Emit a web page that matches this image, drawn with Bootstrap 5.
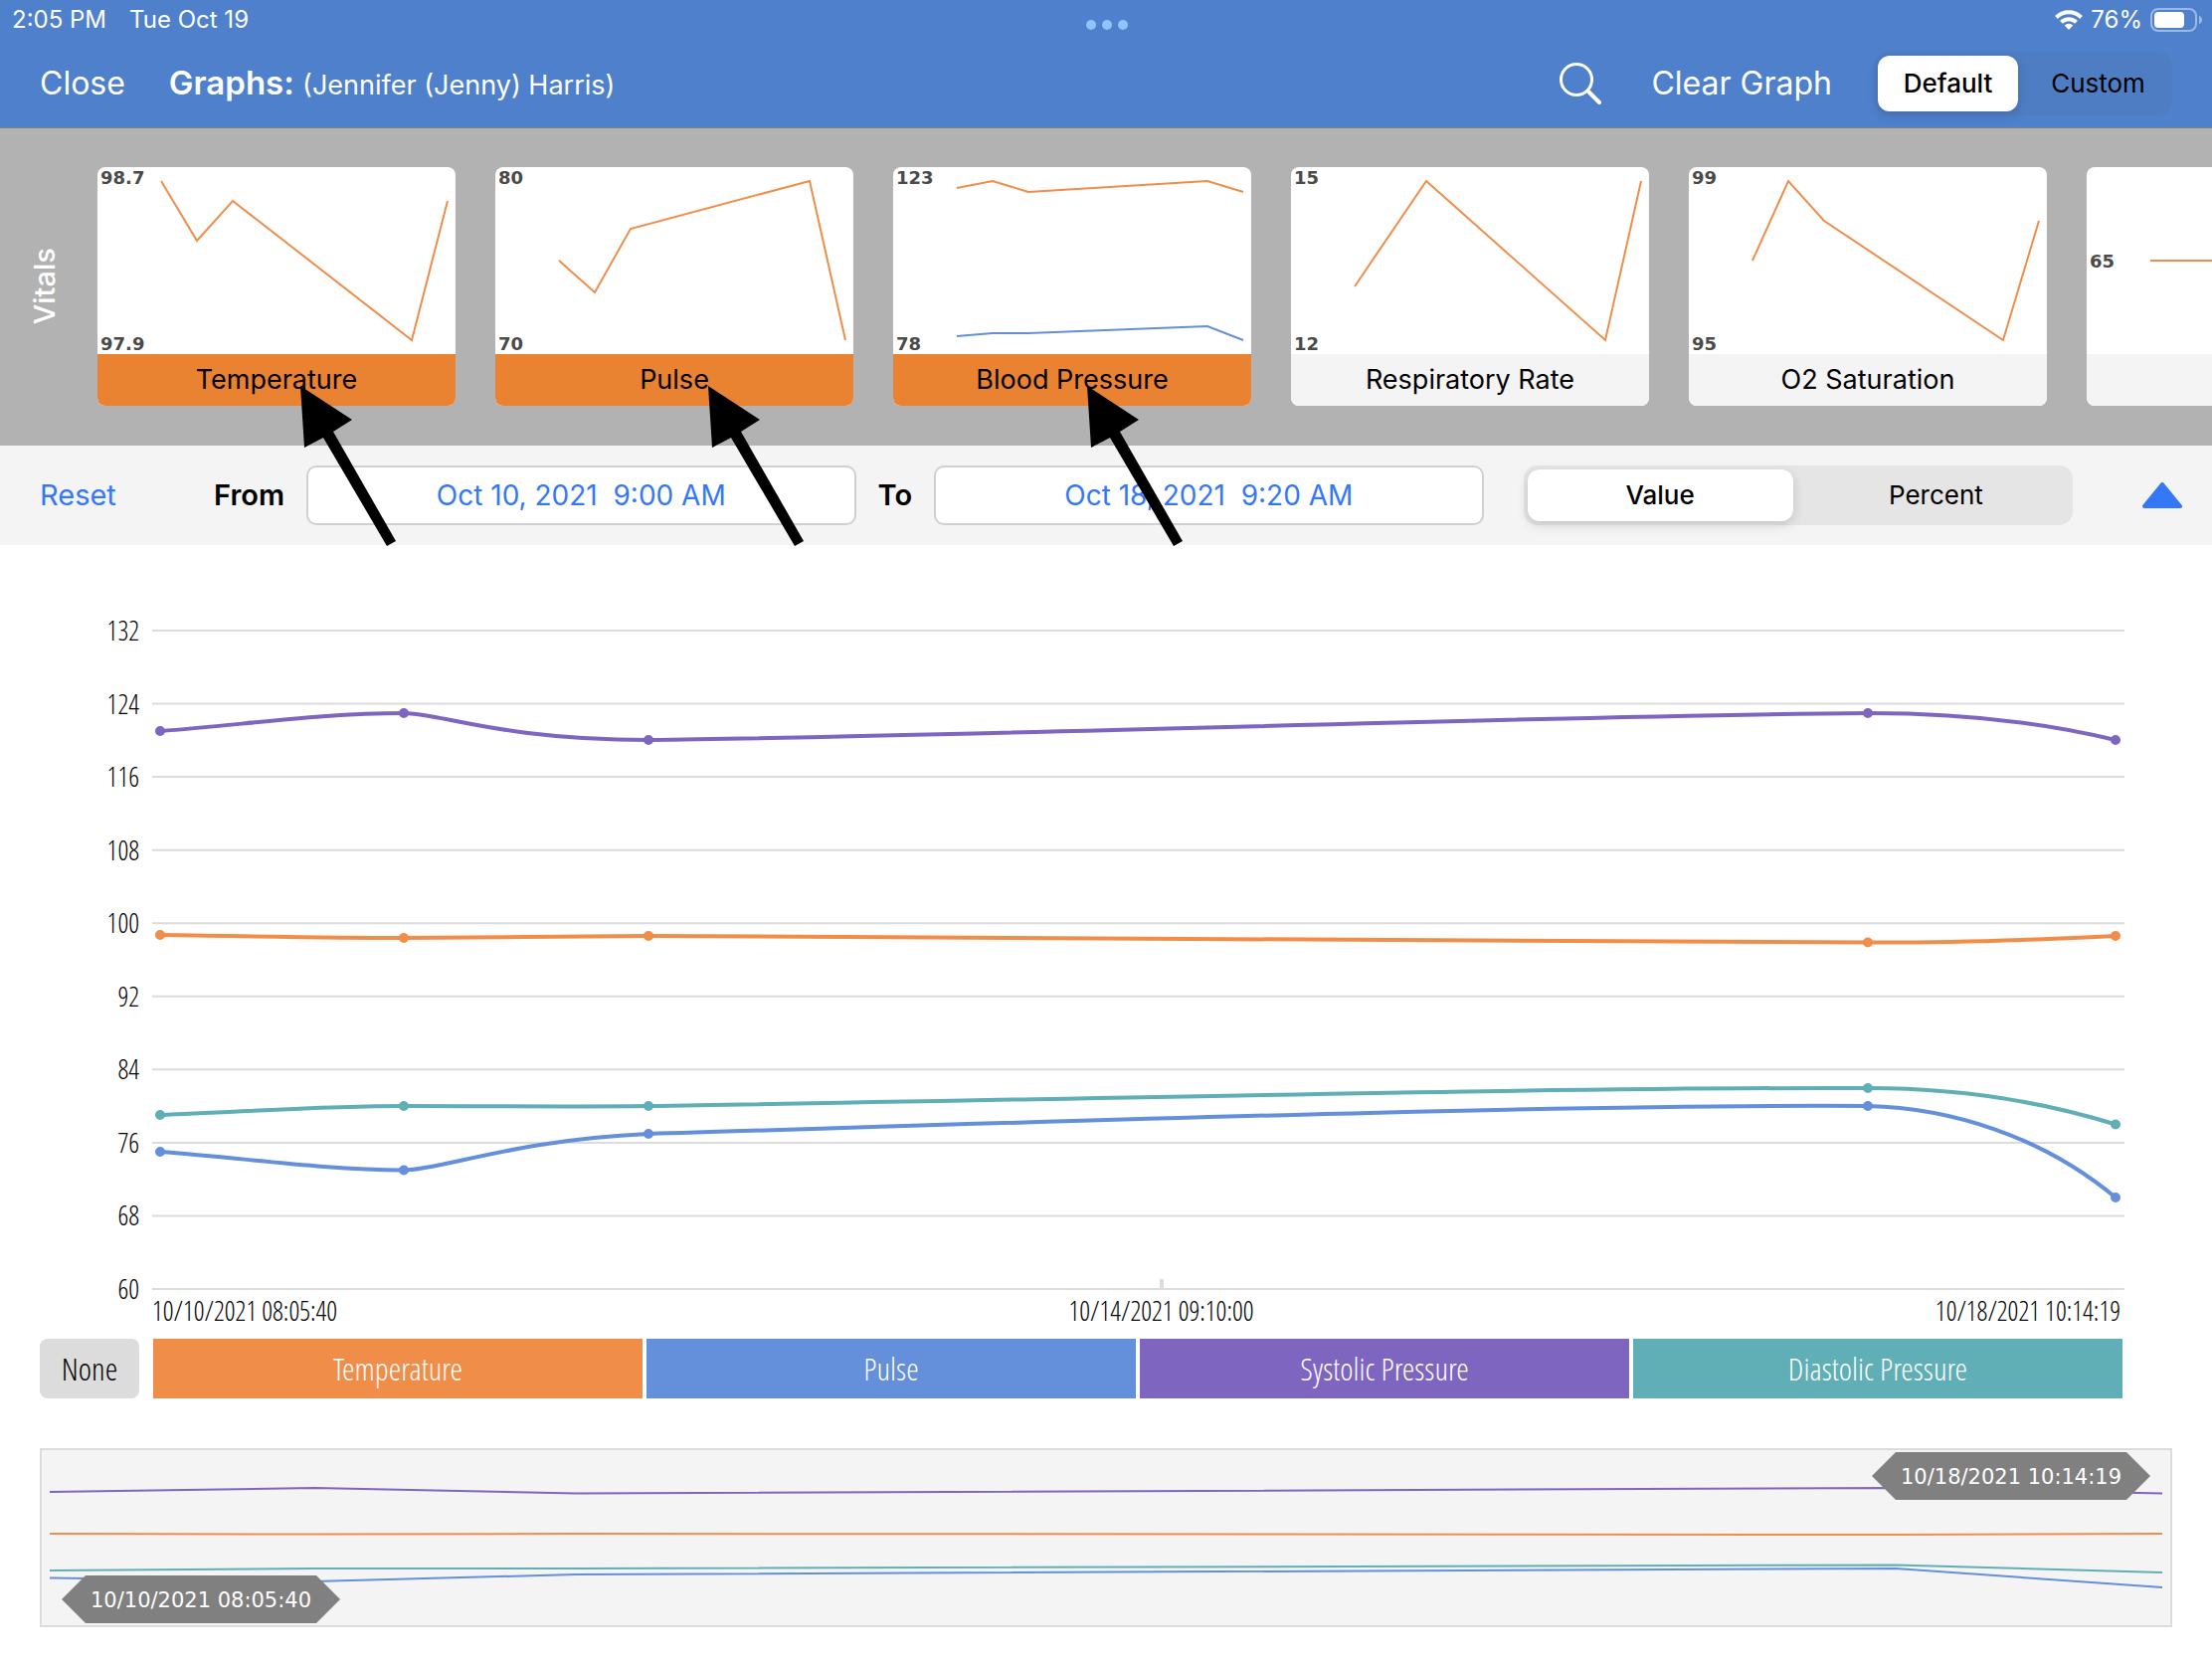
<!DOCTYPE html>
<html lang="en">
<head>
<meta charset="utf-8">
<meta name="viewport" content="width=device-width, initial-scale=1">
<title>Graphs</title>
<link href="https://cdn.jsdelivr.net/npm/bootstrap@5.3.0/dist/css/bootstrap.min.css" rel="stylesheet">
<style>
  :root { --temp: #f08d49; --pulse: #648fda; --sys: #7e65c0; --dia: #60afb7; --rule: #dcdcdc; --ios: #3478f6; }
  body { font-family: Inter, "Liberation Sans", sans-serif; color: #000; background: #fff; overflow-x: hidden; }
  svg { display: block; }
  .topbar { background: #4e80cc; color: #fff; border-bottom: 1px solid #808080; }
  .status { height: 40px; padding: 0 10px 0 12px; font-size: 24px; line-height: 40px; }
  .status-side { flex: 1 1 0; }
  .status-time { margin-right: 23px; }
  .multitask { gap: 6px; margin-top: 20px; }
  .multitask i { width: 10px; height: 10px; border-radius: 50%; background: #90c4ff; }
  .navrow { height: 88px; padding: 0 40px; }
  .nav-action { color: #fff; font-size: 32px; line-height: 40px; padding: 0; border: 0; background: none; }
  .clear-btn { margin: 0 42px 0 50px; }
  .graph-title { font-size: 33px; line-height: 40px; font-weight: 600; margin: 0 0 0 44px; }
  .graph-title span { font-size: 27px; font-weight: 400; }
  .segment { border-radius: 14px; padding: 4px; gap: 10px; background: #e5e5e5; }
  .segment label { flex: 1 1 0; text-align: center; border-radius: 12px; font-size: 26px; cursor: pointer; }
  .segment input:checked + label { background: #fff; font-weight: 500; box-shadow: 0 4px 12px rgba(0,0,0,.14); }
  .segment-nav { width: 300px; background: #4f7dc3; }
  .segment-nav label { line-height: 56px; }
  .segment-range { flex: 1 1 0; margin-left: 18px; }
  .segment-range label { line-height: 52px; }
  .strip { background: #b2b2b2; padding: 39px 0 40px; overflow-x: clip; }
  .strip-name { width: 98px; flex: none; color: #fff; font-size: 29px; font-weight: 500; }
  .strip-name span { writing-mode: vertical-rl; transform: rotate(180deg); line-height: 34px; margin-right: 8px; }
  .tiles { gap: 40px; }
  .tile { width: 360px; }
  .tile button { display: block; width: 100%; padding: 0; border: 0; border-radius: 8px; overflow: hidden; background: #fff; color: #000; }
  .tile-plot { height: 188px; padding: 1px 3px 0; }
  .tile-plot > span { font: 700 18px/20px "DejaVu Sans", sans-serif; color: #4a4a4a; }
  .tile-plot svg { position: absolute; inset: 0; fill: none; stroke-width: 2; }
  .tile-name { display: block; background: #f4f4f4; font-size: 27px; line-height: 52px; }
  .tile .active .tile-name { background: #ea8331; }
  .pointer-arrow { position: absolute; top: 220px; z-index: 3; pointer-events: none; }
  .at-temp { left: 204px; } .at-pulse { left: 214px; } .at-bp { left: 195px; }
  .rangebar { background: #f4f4f4; height: 100px; padding: 0 30px 0 40px; font-size: 29px; }
  .reset-btn { width: 175px; flex: none; padding: 0; border: 0; background: none; color: var(--ios); text-align: left; }
  .rangebar .range-label { font-weight: 600; }
  .date-box { flex: 1 1 0; min-width: 0; height: 60px; border: 2px solid #d0d0d0; border-radius: 10px; background: #fff; color: var(--ios); font-size: 28px; text-align: center; margin: 0 22px; }
  .collapse-btn { border: 0; background: none; padding: 0; margin-left: 70px; }
  .cond { font-family: "Open Sans Condensed Light", "Open Sans Condensed", "Liberation Sans Narrow", sans-serif; font-weight: 300; }
  .chart { padding: 74px 88px 0 40px; }
  .y-axis { width: 100px; height: 686px; font-size: 27px; line-height: 24px; text-align: right; }
  .plot { flex: 1 1 0; height: 662px; margin: 12px 0 0 13px; overflow: visible; fill: none; }
  .plot path, .overview path { vector-effect: non-scaling-stroke; }
  .grid-lines { stroke: var(--rule); stroke-width: 2; }
  .curve { stroke-width: 4; }
  .dots { stroke-width: 10; stroke-linecap: round; }
  .c-temp { stroke: var(--temp); } .c-pulse { stroke: var(--pulse); } .c-sys { stroke: var(--sys); } .c-dia { stroke: var(--dia); }
  .x-axis { display: grid; grid-template-columns: auto 1fr auto; padding: 0 4px 0 113px; font-size: 27px; line-height: 20px; }
  .x-axis .x-mid { padding-left: 50px; text-align: center; }
  .legend-row { padding: 18px 90px 0 40px; font-size: 32px; }
  .legend-row button { border: 0; padding: 0; height: 60px; line-height: 58px; color: #fff; flex: 1 1 0; font-weight: inherit; }
  .legend-row .none-btn { flex: none; width: 100px; margin-right: 14px; border-radius: 8px; background: var(--rule); color: #000; }
  .legend-bars { gap: 4px; }
  .legend-row .b-temp { background: var(--temp); } .legend-row .b-pulse { background: var(--pulse); } .legend-row .b-sys { background: var(--sys); } .legend-row .b-dia { background: var(--dia); }
  .overview { height: 180px; margin: 50px 40px 32px; border: 2px solid var(--rule); background: #f4f4f4; }
  .overview svg { width: 100%; height: 176px; padding: 0 8px; fill: none; stroke-width: 2; overflow: visible; }
  .handle { position: absolute; width: 280px; height: 48px; background: #808080; color: #fff; text-align: center; font: 21px/50px "DejaVu Sans", sans-serif;
    clip-path: polygon(24px 0, calc(100% - 24px) 0, 100% 50%, calc(100% - 24px) 100%, 24px 100%, 0 50%); }
  .handle-from { left: 20px; bottom: 2px; } .handle-to { right: 20px; top: 2px; }
</style>
</head>
<body>
<svg width="0" height="0" class="position-absolute" aria-hidden="true">
  <symbol id="arrow" viewBox="0 0 98 163"><path d="M0 0 52 34 33 46 96 156 87 161 23 52 4 62Z"/></symbol>
</svg>

<header class="topbar">
  <div class="status d-flex">
    <div class="status-side d-flex"><span class="status-time">2:05 PM</span><span>Tue Oct 19</span></div>
    <div class="multitask d-flex"><i></i><i></i><i></i></div>
    <div class="status-side d-flex justify-content-end align-items-center">
      <svg class="me-2" width="28" height="20" viewBox="0 0 28 20" fill="none" stroke="#fff" stroke-width="4"><path d="M1.500 7.500a17.600 17.600 0 0 1 25 0M6.500 12.300a10.500 10.500 0 0 1 15 0"/><path d="M14 20l-4.300-4.500a6 6 0 0 1 8.600 0z" fill="#fff" stroke="none"/></svg>
      <span class="me-2">76%</span>
      <svg width="52" height="24" viewBox="0 0 52 24"><rect x="1" y="1" width="45" height="22" rx="7" fill="none" stroke="#fff" stroke-opacity=".45" stroke-width="2"/><rect x="4" y="4" width="30" height="16" rx="4" fill="#fff"/><path d="M49 8c4 1 4 7 0 8z" fill="#fff" fill-opacity=".45"/></svg>
    </div>
  </div>
  <nav class="navrow d-flex align-items-center">
    <button type="button" class="nav-action">Close</button>
    <h1 class="graph-title">Graphs: <span>(Jennifer (Jenny) Harris)</span></h1>
    <button type="button" class="nav-action ms-auto" aria-label="Search">
      <svg width="42" height="42" viewBox="0 0 42 42" fill="none" stroke="#fff" stroke-width="3"><circle cx="17" cy="17" r="15.500"/><path d="M28.500 28.500 40 40" stroke-width="4" stroke-linecap="round"/></svg>
    </button>
    <button type="button" class="nav-action clear-btn">Clear Graph</button>
    <div class="segment segment-nav d-flex text-black" role="group" aria-label="Graph set">
      <input class="visually-hidden" type="radio" name="set" id="set-default" checked><label for="set-default">Default</label>
      <input class="visually-hidden" type="radio" name="set" id="set-custom"><label for="set-custom">Custom</label>
    </div>
  </nav>
</header>

<section class="strip d-flex">
  <div class="strip-name d-flex align-items-center justify-content-center"><span>Vitals</span></div>
  <div class="tiles d-flex">
    <div class="tile position-relative flex-shrink-0">
      <button type="button" class="active">
        <span class="tile-plot position-relative d-flex flex-column justify-content-between align-items-start"><span>98.7</span><span>97.9</span>
          <svg width="360" height="188"><path class="c-temp" d="M64 14 100 74 136 34 316 174 352 34"/></svg></span>
        <span class="tile-name">Temperature</span>
      </button>
      <svg class="pointer-arrow at-temp" width="98" height="163"><use href="#arrow"/></svg>
    </div>
    <div class="tile position-relative flex-shrink-0">
      <button type="button" class="active">
        <span class="tile-plot position-relative d-flex flex-column justify-content-between align-items-start"><span>80</span><span>70</span>
          <svg width="360" height="188"><path class="c-temp" d="M64 94 100 126 136 62 316 14 352 174"/></svg></span>
        <span class="tile-name">Pulse</span>
      </button>
      <svg class="pointer-arrow at-pulse" width="98" height="163"><use href="#arrow"/></svg>
    </div>
    <div class="tile position-relative flex-shrink-0">
      <button type="button" class="active">
        <span class="tile-plot position-relative d-flex flex-column justify-content-between align-items-start"><span>123</span><span>78</span>
          <svg width="360" height="188"><path class="c-temp" d="M64 21 100 14 136 25 316 14 352 25"/><path class="c-pulse" d="M64 170 100 167 136 167 316 160 352 174"/></svg></span>
        <span class="tile-name">Blood Pressure</span>
      </button>
      <svg class="pointer-arrow at-bp" width="98" height="163"><use href="#arrow"/></svg>
    </div>
    <div class="tile position-relative flex-shrink-0">
      <button type="button">
        <span class="tile-plot position-relative d-flex flex-column justify-content-between align-items-start"><span>15</span><span>12</span>
          <svg width="360" height="188"><path class="c-temp" d="M64 120 136 14 316 174 352 14"/></svg></span>
        <span class="tile-name">Respiratory Rate</span>
      </button>
    </div>
    <div class="tile position-relative flex-shrink-0">
      <button type="button">
        <span class="tile-plot position-relative d-flex flex-column justify-content-between align-items-start"><span>99</span><span>95</span>
          <svg width="360" height="188"><path class="c-temp" d="M64 94 100 14 136 54 316 174 352 54"/></svg></span>
        <span class="tile-name">O2 Saturation</span>
      </button>
    </div>
    <div class="tile position-relative flex-shrink-0">
      <button type="button" aria-label="Next vital">
        <span class="tile-plot position-relative d-flex flex-column justify-content-center align-items-start"><span>65</span>
          <svg width="360" height="188"><path class="c-temp" d="M64 94H352"/></svg></span>
        <span class="tile-name">&nbsp;</span>
      </button>
    </div>
  </div>
</section>

<form class="rangebar d-flex align-items-center">
  <button type="button" class="reset-btn">Reset</button>
  <label class="range-label" for="from">From</label>
  <input class="date-box" id="from" type="text" value="Oct 10, 2021&nbsp; 9:00 AM">
  <label class="range-label" for="to">To</label>
  <input class="date-box" id="to" type="text" value="Oct 18, 2021&nbsp; 9:20 AM">
  <div class="segment segment-range d-flex" role="group" aria-label="Scale">
    <input class="visually-hidden" type="radio" name="scale" id="scale-value" checked><label for="scale-value">Value</label>
    <input class="visually-hidden" type="radio" name="scale" id="scale-percent"><label for="scale-percent">Percent</label>
  </div>
  <button type="button" class="collapse-btn" aria-label="Collapse"><svg width="40" height="26" viewBox="0 0 40 26" fill="#3478f6" stroke="#3478f6" stroke-width="4" stroke-linejoin="round"><path d="M20 2 38 24H2Z"/></svg></button>
</form>

<main>
  <section class="chart cond">
    <div class="d-flex">
      <div class="y-axis d-flex flex-column justify-content-between">
        <span>132</span><span>124</span><span>116</span><span>108</span><span>100</span><span>92</span><span>84</span><span>76</span><span>68</span><span>60</span>
      </div>
      <svg class="plot" viewBox="0 0 1983 662" preserveAspectRatio="none" role="img" aria-label="Vitals over time">
        <path class="grid-lines" d="M0 0H1983M0 73.500H1983M0 147H1983M0 220.700H1983M0 294.200H1983M0 367.800H1983M0 441.300H1983M0 514.900H1983M0 588.400H1983M0 662H1983"/>
        <path stroke="#dcdcdc" stroke-width="4" d="M1015 652V661"/>
        <path class="curve c-temp" d="M8 306C90 307 171 309 253 309C335 309 417 307 499 307C867 308 1419 313.500 1725 313.500C1807 314 1892 311 1974 307"/>
        <path class="dots c-temp" d="M8 306h0M253 309h0M499 307h0M1725 313.500h0M1974 307h0"/>
        <path class="curve c-pulse" d="M8 524C90 530 171 542 253 542.500C290 542.500 364 512 499 506C867 495 1419 476 1725 478C1807 480 1899 507.500 1974 570"/>
        <path class="dots c-pulse" d="M8 524h0M253 542.500h0M499 506h0M1725 478h0M1974 570h0"/>
        <path class="curve c-sys" d="M8 101C90 95 171 83 253 83C290 83 351 110 499 110C805 107 1419 85 1725 83C1807 83 1892 90 1974 110"/>
        <path class="dots c-sys" d="M8 101h0M253 83h0M499 110h0M1725 83h0M1974 110h0"/>
        <path class="curve c-dia" d="M8 487C90 484 171 478 253 478C335 478 417 479 499 478C867 472.500 1419 459 1725 460C1807 460 1892 471 1974 496.500"/>
        <path class="dots c-dia" d="M8 487h0M253 478h0M499 478h0M1725 460h0M1974 496.500h0"/>
      </svg>
    </div>
    <div class="x-axis"><span>10/10/2021 08:05:40</span><span class="x-mid">10/14/2021 09:10:00</span><span>10/18/2021 10:14:19</span></div>
  </section>

  <div class="legend-row cond d-flex">
    <button type="button" class="none-btn">None</button>
    <div class="legend-bars d-flex flex-grow-1">
      <button type="button" class="b-temp">Temperature</button>
      <button type="button" class="b-pulse">Pulse</button>
      <button type="button" class="b-sys">Systolic Pressure</button>
      <button type="button" class="b-dia">Diastolic Pressure</button>
    </div>
  </div>

  <section class="overview position-relative">
    <svg viewBox="0 0 2124 176" preserveAspectRatio="none" aria-hidden="true">
      <path class="c-temp" d="M0 84 266 84.500 529 84 1856 85 2124 84"/>
      <path class="c-pulse" d="M0 128.500 266 132 529 125 1856 119 2124 138"/>
      <path class="c-sys" d="M0 42 266 38 529 43.500 1856 38 2124 43.500"/>
      <path class="c-dia" d="M0 121 266 119 529 119 1856 115.500 2124 123"/>
    </svg>
    <div class="handle handle-to">10/18/2021 10:14:19</div>
    <div class="handle handle-from">10/10/2021 08:05:40</div>
  </section>
</main>
<script src="https://cdn.jsdelivr.net/npm/bootstrap@5.3.0/dist/js/bootstrap.bundle.min.js"></script>
</body>
</html>
